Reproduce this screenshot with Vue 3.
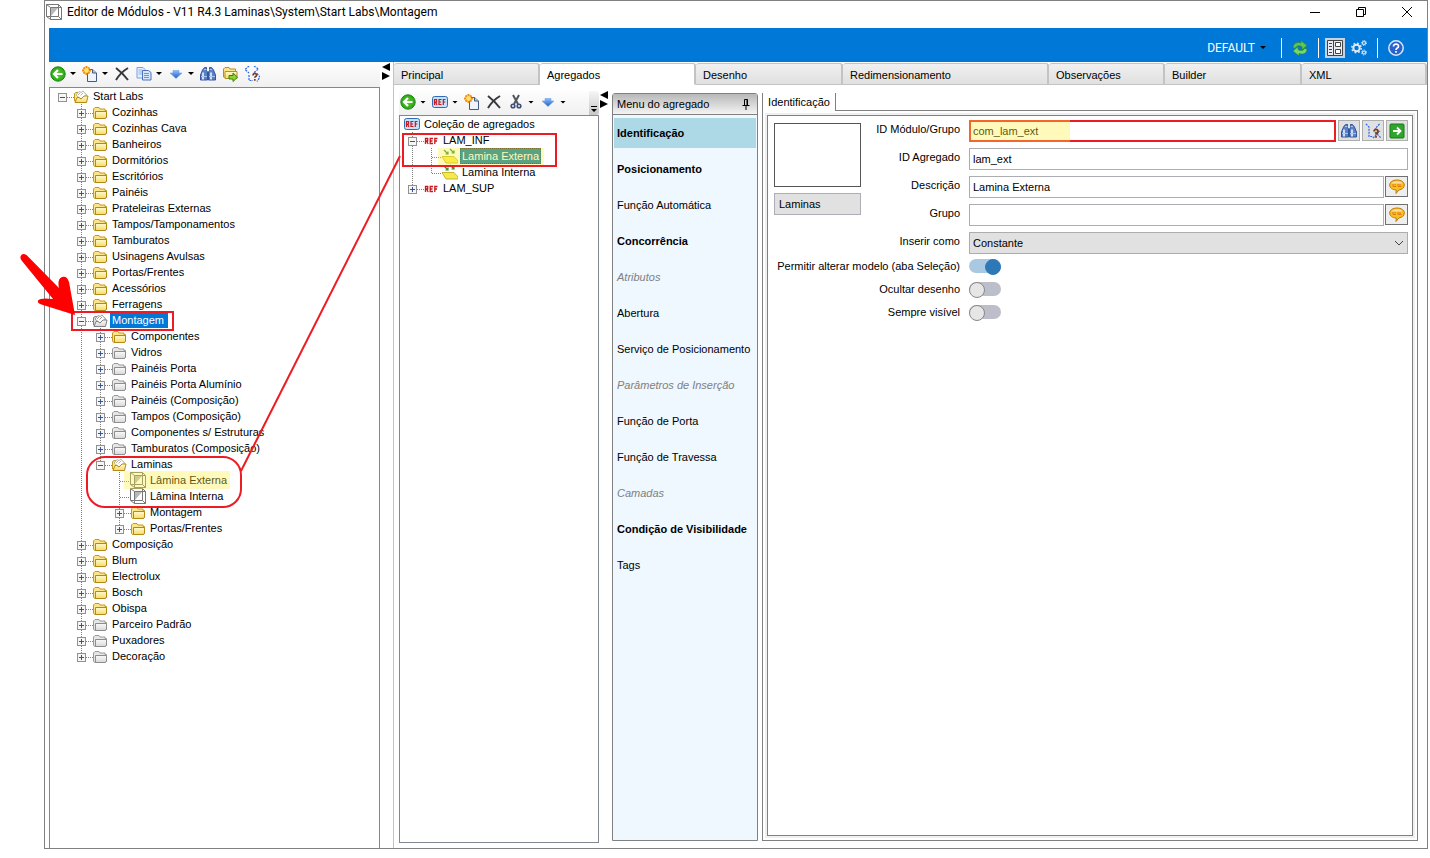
<script setup>
import { ref } from 'vue'

const y = (label, children) => ({ label, icon: 'folder', kids: true, children })
const g = (label, children) => ({ label, icon: 'folder-gray', kids: true, children })

const modules = {
  label: 'Start Labs', icon: 'folder-open', kids: true, children: [
    y('Cozinhas'), y('Cozinhas Cava'), y('Banheiros'), y('Dormitórios'), y('Escritórios'), y('Painéis'),
    y('Prateleiras Externas'), y('Tampos/Tamponamentos'), y('Tamburatos'), y('Usinagens Avulsas'),
    y('Portas/Frentes'), y('Acessórios'), y('Ferragens'),
    { label: 'Montagem', icon: 'folder-open-gray', kids: true, state: 'selected', children: [
      y('Componentes'), g('Vidros'), g('Painéis Porta'), g('Painéis Porta Alumínio'), g('Painéis (Composição)'),
      g('Tampos (Composição)'), g('Componentes s/ Estruturas'), g('Tamburatos (Composição)'),
      { label: 'Laminas', icon: 'folder-open', kids: true, children: [
        { label: 'Lâmina Externa', icon: 'cube' },
        { label: 'Lâmina Interna', icon: 'cube' },
        y('Montagem'), y('Portas/Frentes'),
      ] },
    ] },
    y('Composição'), y('Blum'), y('Electrolux'), y('Bosch'), y('Obispa'),
    g('Parceiro Padrão'), g('Puxadores'), g('Decoração'),
  ],
}

const aggregates = {
  label: 'Coleção de agregados', icon: 'ref-box', children: [
    { label: 'LAM_INF', icon: 'ref', kids: true, children: [
      { label: 'Lamina Externa', icon: 'sheet', state: 'current' },
      { label: 'Lamina Interna', icon: 'sheet' },
    ] },
    { label: 'LAM_SUP', icon: 'ref', kids: true },
  ],
}

// Turns a tree into rows; each row lists the guide cells drawn before its icon.
function flatten(node, guides = [], own = '', rows = []) {
  rows.push({ ...node, guides, own, open: !!node.children })
  const kids = node.children || []
  kids.forEach((kid, i) => {
    const last = i === kids.length - 1
    const passed = own === '' ? ['none'] : [...guides, own === 'full' ? 'line' : 'none']
    flatten(kid, passed, last ? 'half' : 'full', rows)
  })
  return rows
}

const moduleRows = flatten(modules)
const aggregateRows = flatten(aggregates).map(r => ({ ...r, guides: r.guides.slice(1) }))

const leftTools = [
  ['back', 1, 'Voltar'], ['new', 1, 'Novo'], ['delete', 0, 'Excluir'], ['copy', 1, 'Copiar'],
  ['down', 1, 'Mover'], ['find', 0, 'Localizar'], ['export', 0, 'Exportar'], ['where', 0, 'Onde é usado'],
]
const aggTools = [
  ['back', 1, 'Voltar'], ['ref-box', 1, 'Referência'], ['new', 0, 'Novo'], ['delete', 0, 'Excluir'],
  ['cut', 1, 'Recortar'], ['down', 1, 'Mover'],
]
const tabs = ['Principal', 'Agregados', 'Desenho', 'Redimensionamento', 'Observações', 'Builder', 'XML']
const menu = [
  ['Identificação', 'bold active'], ['Posicionamento', 'bold'], ['Função Automática', ''], ['Concorrência', 'bold'],
  ['Atributos', 'off'], ['Abertura', ''], ['Serviço de Posicionamento', ''], ['Parâmetros de Inserção', 'off'],
  ['Função de Porta', ''], ['Função de Travessa', ''], ['Camadas', 'off'], ['Condição de Visibilidade', 'bold'], ['Tags', ''],
]

const moduleId = ref('com_lam_ext')
const aggregateId = ref('lam_ext')
const description = ref('Lamina Externa')
const group = ref('')
const insertAs = ref('Constante')
const toggles = ref([
  { id: 'alterar', label: 'Permitir alterar modelo (aba Seleção)', on: true },
  { id: 'ocultar', label: 'Ocultar desenho', on: false },
  { id: 'visivel', label: 'Sempre visível', on: false },
])
</script>

<template>
  <div class="page">
    <svg class="defs" width="0" height="0" aria-hidden="true">
      <defs>
        <linearGradient id="gold" x1="0" y1="0" x2="0" y2="1"><stop offset="0" stop-color="#fffbd0" /><stop offset="1" stop-color="#f8d969" /></linearGradient>
        <linearGradient id="silver" x1="0" y1="0" x2="0" y2="1"><stop offset="0" stop-color="#fafafa" /><stop offset="1" stop-color="#d8d8d8" /></linearGradient>
        <radialGradient id="green"><stop offset="0" stop-color="#5fd02c" /><stop offset="1" stop-color="#2aa51a" /></radialGradient>
        <linearGradient id="blue" x1="0" y1="0" x2="0" y2="1"><stop offset="0" stop-color="#8dbdf6" /><stop offset="1" stop-color="#1c5cc8" /></linearGradient>
      </defs>
      <symbol id="i-folder" viewBox="0 0 16 16">
        <path d="M1.500 13V5l1.500-1.500h4L8 5h5v1.500h1.500V13l-1 1.500h-11z" fill="#fbe58a" stroke="#c39a22" />
        <path d="M3.500 14V7.500h11V13l-1 1.500h-10z" fill="url(#gold)" stroke="#b58a14" />
      </symbol>
      <symbol id="i-folder-gray" viewBox="0 0 16 16">
        <path d="M1.500 13V5l1.500-1.500h4L8 5h5v1.500h1.500V13l-1 1.500h-11z" fill="#e6e6e6" stroke="#999" />
        <path d="M3.500 14V7.500h11V13l-1 1.500h-10z" fill="url(#silver)" stroke="#8d8d8d" />
      </symbol>
      <symbol id="i-folder-open" viewBox="0 0 16 16">
        <path d="M1.500 13V5.500L3 4.500h2L13 6v7z" fill="#fbe58a" stroke="#c39a22" />
        <path d="M3 7l3-3.500 2 1L10 3l3.500 4L9 12z" fill="#fff" stroke="#b9b9a8" /><path d="M5 7l2-2M7.500 7.500L10 5" stroke="#b9b9a8" />
        <path d="M2 14.500L4 9.500h2l2 1.500 3-3h4l-1.500 6.500z" fill="url(#gold)" stroke="#b58a14" />
      </symbol>
      <symbol id="i-folder-open-gray" viewBox="0 0 16 16">
        <path d="M1.500 13V5.500L3 4.500h2L13 6v7z" fill="#ddd" stroke="#808080" />
        <path d="M3 7l3-3.500 2 1L10 3l3.500 4L9 12z" fill="#fff" stroke="#999" /><path d="M5 7l2-2M7.500 7.500L10 5" stroke="#999" />
        <path d="M2 14.500L4 9.500h2l2 1.500 3-3h4l-1.500 6.500z" fill="url(#silver)" stroke="#808080" />
      </symbol>
      <symbol id="i-cube" viewBox="0 0 16 16">
        <path d="M.5 .5h12l3 3v12h-11l-4-3z" fill="#fff" stroke="#777" />
        <path d="M4.500 3.500h8v9h-8zM.5 .5l4 3M15.500 3.500h-3M.5 12.500l4 0M15.500 15.500l-3-3M4.500 12.500v3M12.500 .5v3" fill="none" stroke="#777" />
        <path d="M12 4v8H5z" fill="#fff" /><path d="M5 4h7l-7 8z" fill="#b8b8b8" />
      </symbol>
      <symbol id="i-ref-box" viewBox="0 0 16 16">
        <rect x=".5" y="2.500" width="15" height="11" rx="2" fill="#c5e1fa" stroke="#2f6cb3" />
        <path d="M2.500 11V5.500h2v2.500h-2M3.500 8l1.500 3M9.500 5.500H7v5h2.500M7 8h2M13.500 5.500h-2.200V11M11.300 8h2" fill="none" stroke="#c8171d" stroke-width="1.200" />
      </symbol>
      <symbol id="i-ref" viewBox="0 0 16 16">
        <path d="M2.500 12V6.500h2.200V9H2.500M3.500 9l1.700 3M10 6.500H7.200v5H10M7.200 9H9.500M14.500 6.500h-2.700V12M11.800 9H14" fill="none" stroke="#c8171d" stroke-width="1.300" />
      </symbol>
      <symbol id="i-sheet" viewBox="0 0 16 16">
        <path d="M0 8.500h12l4 4.500v2H4z" fill="#f4ea4e" stroke="#c9b72a" />
        <path d="M2 2l4 4M6 3.500V6H3.500M8 1l4 4M12 2.500V5H9.500" fill="none" stroke="#2d8f23" stroke-width="1.200" />
      </symbol>
      <symbol id="i-back" viewBox="0 0 16 16">
        <circle cx="8" cy="8" r="7.200" fill="url(#green)" stroke="#1b8511" />
        <path d="M12.500 8H4.500M8 4L4 8l4 4" fill="none" stroke="#fff" stroke-width="2.200" />
      </symbol>
      <symbol id="i-new" viewBox="0 0 16 16">
        <path d="M5.500 3.500h5l4 3.500v8.500h-9z" fill="#eef4fd" stroke="#46597e" /><path d="M10.500 3.500V7h4" fill="#b8cbe8" stroke="#46597e" />
        <path d="M4.500 0v9M0 4.500h9M1.500 1.500l6 6M7.500 1.500l-6 6" stroke="#f08b12" stroke-width="2" /><circle cx="4.500" cy="4.500" r="2.400" fill="#ffe36b" />
      </symbol>
      <symbol id="i-delete" viewBox="0 0 16 16">
        <path d="M2 2c4 3 8 7 12 12M14 2C9 5 5 9 2 14" fill="none" stroke="#37393e" stroke-width="2" />
      </symbol>
      <symbol id="i-copy" viewBox="0 0 16 16">
        <path d="M1 1.500h6l2 2V12H1z" fill="#e5effd" stroke="#7b9fdc" /><path d="M2.500 4h4M2.500 6h4M2.500 8h4" stroke="#8db0ea" />
        <path d="M6.500 4.500h6l2.500 2V14H6.500z" fill="#d7e6fb" stroke="#4a74bd" /><path d="M8 7.500h5M8 9.500h5M8 11.500h5" stroke="#6a94db" />
      </symbol>
      <symbol id="i-down" viewBox="0 0 16 16"><path d="M5 4.500h6V7h3L8 12.500 2 7h3z" fill="url(#blue)" stroke="#6fa2e8" stroke-width=".6" /></symbol>
      <symbol id="i-find" viewBox="0 0 16 16">
        <path d="M4.500 1.500h2v3l1 1.500v8h-7V9l2-5zM9.500 1.500h2l2 2.500 2 5v5h-7V6l1-1.500z" fill="#5c82c6" stroke="#33569c" />
        <path d="M7 6h2v3H7z" fill="#33569c" /><path d="M3 6.500v7M11 6.500v7" stroke="#dce8fd" stroke-width="1.800" /><path d="M4 3.500h2.500M9.500 3.500H12M1 10.500h6M9 10.500h6" stroke="#a9c2ee" />
      </symbol>
      <symbol id="i-export" viewBox="0 0 16 16">
        <path d="M1.500 11V3L3 1.500h4L8 3h5.500v8z" fill="#fbe58a" stroke="#b78f1c" /><path d="M3 12.500V5.500h12v7z" fill="url(#gold)" stroke="#b78f1c" />
        <path d="M7 9.500h4V7l4.500 4.200L11 15.500V13H7z" fill="#8ed431" stroke="#3c7c15" />
      </symbol>
      <symbol id="i-where" viewBox="0 0 16 16">
        <path d="M5 0L1 3.500 5 7M10 0l4.500 3L10 6.500M5 9v5.500h4M13 7.500l3 3.500-3 4.500" fill="none" stroke="#2b66e8" stroke-width="1.200" stroke-dasharray="2 1" />
        <path d="M9 9.500c0-3 4-2.500 3.500 0-.3 1.200-1.700 1-1.700 2.300M10.800 13v1.800" fill="none" stroke="#7a3d1d" stroke-width="1.700" />
      </symbol>
      <symbol id="i-where-go" viewBox="0 0 16 16">
        <path d="M1 1l3 3v9.500h4M14.500 1L10 6M8 15l7-7M10 9l6 6" fill="none" stroke="#2b66e8" stroke-width="1.200" stroke-dasharray="2 1" />
        <path d="M9 8.500c0-3 4.500-2.500 4 0-.3 1.500-2 1-2 3M11 13v1.800" fill="none" stroke="#7a3d1d" stroke-width="1.800" />
      </symbol>
      <symbol id="i-cut" viewBox="0 0 16 16">
        <path d="M5 1l5 9M11 1L6 10" stroke="#50555e" stroke-width="2" />
        <circle cx="5" cy="12" r="1.800" fill="none" stroke="#3c4d78" stroke-width="1.600" /><circle cx="11" cy="12" r="1.800" fill="none" stroke="#3c4d78" stroke-width="1.600" />
      </symbol>
      <symbol id="i-go" viewBox="0 0 16 16">
        <rect x="1" y="1" width="14" height="14" rx="1" fill="#2fa52c" stroke="#157a17" /><path d="M4 8h7M8 4.500L11.500 8 8 11.500" fill="none" stroke="#fff" stroke-width="1.800" />
      </symbol>
      <symbol id="i-talk" viewBox="0 0 16 16">
        <path d="M8 1c4.200 0 7.300 2 7.300 5 0 2.700-2.300 4.600-5.500 5L7 14.500l.2-3.500C3.500 10.800.7 8.900.7 6 .7 3 3.800 1 8 1z" fill="#fbbf1e" stroke="#bd7e0b" />
        <path d="M2.500 4.500C4 1.500 12 1.500 13.500 4.500z" fill="#ffdca0" /><path d="M4 5v2.500h3M6 5v1.500M9 5v2.500M9 7.500h3.500M11 5v2" fill="none" stroke="#dd7c19" />
      </symbol>
      <symbol id="i-sync" viewBox="0 0 16 16">
        <path d="M1 8C1 3.500 5 1.500 9 3V.5L15 5.500 10 10V7C7.500 5 5 5.500 3.500 8z" fill="#5fc452" stroke="#2a8a2b" stroke-width=".7" />
        <path d="M15 9c0 4.500-4 6-8 4.500V16L1 11l5-4.500V9.500c2.500 1.500 5 1.500 6.500-1z" fill="#78d768" stroke="#2a8a2b" stroke-width=".7" />
      </symbol>
      <symbol id="i-form" viewBox="0 0 16 16">
        <path d="M.5 .5h15v15H.5zM6.500 .5v15" fill="#e9edf3" stroke="#444" /><path d="M2 3.500h3M2 6.500h3M2 9.500h3M2 12.500h3" stroke="#444" />
        <path d="M8.500 2.500h5v4h-5zM8.500 9.500h5v4h-5z" fill="#fff" stroke="#444" />
      </symbol>
      <symbol id="i-gears" viewBox="0 0 16 16">
        <circle cx="5.500" cy="8" r="3.200" fill="none" stroke="#dfe9f4" stroke-width="2" />
        <circle cx="5.500" cy="8" r="4.700" fill="none" stroke="#dfe9f4" stroke-width="1.500" stroke-dasharray="1.800 1.890" />
        <g fill="none" stroke="#dfe9f4"><circle cx="13" cy="3" r="1.500" stroke-width="1.200" /><circle cx="13" cy="3" r="2.500" stroke-dasharray="1 .96" /><circle cx="13" cy="12.500" r="1.500" stroke-width="1.200" /><circle cx="13" cy="12.500" r="2.500" stroke-dasharray="1 .96" /></g>
      </symbol>
      <symbol id="i-help" viewBox="0 0 16 16">
        <circle cx="8" cy="8" r="7.200" fill="#2b62cf" stroke="#dbe6f8" stroke-width="1.500" />
        <path d="M5.500 6.500c0-3.500 5.200-3 5 0-.1 1.700-2.500 1.500-2.500 3.500M8 11v1.800" fill="none" stroke="#fff" stroke-width="1.700" />
      </symbol>
    </svg>

    <main class="window">
      <header class="title">
        <svg class="ico"><use href="#i-cube" /></svg>
        <h1>Editor de Módulos - V11 R4.3 Laminas\System\Start Labs\Montagem</h1>
        <div class="winbtns">
          <button aria-label="Minimizar"><svg viewBox="0 0 12 12"><path d="M1 6.500h10" /></svg></button>
          <button aria-label="Restaurar"><svg viewBox="0 0 12 12"><path d="M1.500 3.500h7v7h-7zM3.500 3.500v-2h7v7h-2" /></svg></button>
          <button aria-label="Fechar"><svg viewBox="0 0 12 12"><path d="M1 1l10 10M11 1L1 11" /></svg></button>
        </div>
      </header>

      <div class="ribbon">
        <button class="profile">DEFAULT <i class="caret"></i></button>
        <span class="sep"></span>
        <button aria-label="Atualizar"><svg class="ico"><use href="#i-sync" /></svg></button>
        <span class="sep"></span>
        <button class="pressed" aria-label="Formulário"><svg class="ico"><use href="#i-form" /></svg></button>
        <button aria-label="Configurações"><svg class="ico"><use href="#i-gears" /></svg></button>
        <span class="sep"></span>
        <button aria-label="Ajuda"><svg class="ico"><use href="#i-help" /></svg></button>
      </div>

      <div class="body">
        <section class="modules">
          <div class="toolbar">
            <div v-for="t in leftTools" :key="t[0]" class="tool">
              <button :aria-label="t[2]"><svg class="ico"><use :href="'#i-' + t[0]" /></svg></button>
              <button v-if="t[1]" class="drop" :aria-label="t[2] + ' opções'"><i class="caret"></i></button>
            </div>
          </div>
          <ul class="tree">
            <li v-for="(r, i) in moduleRows" :key="i">
              <span v-for="(c, k) in r.guides" :key="k" class="cell" :class="c"></span>
              <span class="cell dash" :class="r.own">
                <button v-if="r.kids" class="exp" :class="{ closed: !r.open }" :aria-label="'Expandir ' + r.label"></button>
              </span>
              <svg class="ico node"><use :href="'#i-' + r.icon" /></svg>
              <span class="text" :class="r.state">{{ r.label }}</span>
            </li>
          </ul>
        </section>

        <div class="splitter"><i class="tri left"></i><i class="tri right"></i></div>

        <section class="editor">
          <div class="tabs">
            <button v-for="(t, i) in tabs" :key="t" :class="{ active: i === 1 }">{{ t }}</button>
          </div>
          <div class="panes">
            <section class="aggs">
              <div class="toolbar">
                <div v-for="t in aggTools" :key="t[0]" class="tool">
                  <button :aria-label="t[2]"><svg class="ico"><use :href="'#i-' + t[0]" /></svg></button>
                  <button v-if="t[1]" class="drop" :aria-label="t[2] + ' opções'"><i class="caret"></i></button>
                </div>
                <button class="overflow" aria-label="Mais opções"><svg viewBox="0 0 6 6"><path d="M0 0h6v1H0zM0 3h6L3 6z" /></svg></button>
              </div>
              <ul class="tree">
                <li v-for="(r, i) in aggregateRows" :key="i">
                  <span v-for="(c, k) in r.guides" :key="k" class="cell" :class="c"></span>
                  <span v-if="i > 0" class="cell dash" :class="r.own">
                    <button v-if="r.kids" class="exp" :class="{ closed: !r.open }" :aria-label="'Expandir ' + r.label"></button>
                  </span>
                  <svg class="ico node"><use :href="'#i-' + r.icon" /></svg>
                  <span class="text" :class="r.state">{{ r.label }}</span>
                </li>
              </ul>
            </section>

            <div class="splitter"><i class="tri left"></i><i class="tri right"></i></div>

            <nav class="menu">
              <h2>Menu do agregado
                <svg viewBox="0 0 8 12"><path d="M2.500 7V1.500h3V7M5 1.500V7M.5 7.500h7M4 8v4" /></svg>
              </h2>
              <button v-for="m in menu" :key="m[0]" :class="m[1]">{{ m[0] }}</button>
            </nav>

            <section class="detail">
              <div class="detail-tabs"><button>Identificação</button></div>
              <div class="frame">
                <form class="form" @submit.prevent>
                  <div class="preview">
                    <div class="thumb"></div>
                    <div class="thumb-name">Laminas</div>
                  </div>

                  <label for="mod">ID Módulo/Grupo</label>
                  <div class="field">
                    <input id="mod" v-model="moduleId" class="marked" type="text">
                    <button type="button" aria-label="Localizar módulo"><svg class="ico"><use href="#i-find" /></svg></button>
                    <button type="button" aria-label="Onde é usado"><svg class="ico"><use href="#i-where-go" /></svg></button>
                    <button type="button" aria-label="Ir para"><svg class="ico"><use href="#i-go" /></svg></button>
                  </div>

                  <label for="agg">ID Agregado</label>
                  <div class="field"><input id="agg" v-model="aggregateId" type="text"></div>

                  <label for="desc">Descrição</label>
                  <div class="field tight">
                    <input id="desc" v-model="description" type="text">
                    <button type="button" class="talk" aria-label="Traduzir descrição"><svg class="ico"><use href="#i-talk" /></svg></button>
                  </div>

                  <label for="grp">Grupo</label>
                  <div class="field tight">
                    <input id="grp" v-model="group" type="text">
                    <button type="button" class="talk" aria-label="Traduzir grupo"><svg class="ico"><use href="#i-talk" /></svg></button>
                  </div>

                  <label for="ins">Inserir como</label>
                  <div class="field select">
                    <select id="ins" v-model="insertAs"><option>Constante</option></select>
                    <svg viewBox="0 0 10 6"><path d="M1 1l4 4 4-4" /></svg>
                  </div>

                  <template v-for="t in toggles" :key="t.id">
                    <label class="short" :for="t.id">{{ t.label }}</label>
                    <div class="field short"><input :id="t.id" v-model="t.on" class="toggle" type="checkbox"></div>
                  </template>
                </form>
              </div>
            </section>
          </div>
        </section>
      </div>
    </main>

    <svg class="notes" width="1430" height="858" aria-hidden="true">
      <g class="marker">
        <rect x="124" y="471" width="106" height="18" />
        <rect x="438" y="148" width="106" height="17" />
        <rect x="969" y="120" width="101" height="22" />
      </g>
      <g class="pen">
        <rect x="72" y="312" width="101" height="18" />
        <rect x="87" y="457" width="154" height="50" rx="18" />
        <rect x="403" y="134" width="153" height="32" />
        <path d="M241 471L400 156" />
      </g>
      <path class="arrow" d="M20.500 256.500Q22 252.500 26.500 255L59 288Q57 279 62 277Q67 275.500 69 282L75 315L43 305Q36 303 38.500 300Q41 297.500 53 299L22 261Q20 259 20.500 256.500z" />
    </svg>
  </div>
</template>

<style>
body { margin: 0; background: #fff; }
</style>

<style scoped>
* { box-sizing: border-box; }
.page { position: relative; min-height: 100vh; display: flex; padding: 0 2px 9px 44px; font: 11px/16px "Liberation Sans", Arial, sans-serif; color: #000; overflow: hidden; }
.defs { position: absolute; }
button { font: inherit; color: inherit; background: none; border: 0; padding: 0; margin: 0; }
h1, h2, ul { margin: 0; padding: 0; font: inherit; }
.ico { display: block; width: 16px; height: 16px; flex: none; }
.window { flex: 1; min-width: 0; display: flex; flex-direction: column; border: 1px solid #808080; padding-left: 4px; }
.title { display: flex; align-items: center; height: 27px; padding-bottom: 5px; gap: 5px; margin-left: -3px; font: 12px/20px Roboto, "Noto Sans", sans-serif; }
.winbtns { margin-left: auto; display: flex; gap: 34px; padding-right: 14px; }
.winbtns button { width: 12px; height: 12px; display: flex; }
.winbtns svg { width: 12px; height: 12px; fill: none; stroke: #000; }
.ribbon { height: 34px; background: #0078d7; color: #fff; display: flex; align-items: center; justify-content: flex-end; gap: 10px; padding: 5px 23px 0 0; font: 12px/16px Roboto, "Noto Sans", sans-serif; }
.ribbon .profile { display: flex; align-items: center; gap: 5px; margin-right: 5px; }
.ribbon .sep { width: 1px; height: 20px; background: #fff; }
.ribbon .pressed { background: #c4d3e6; padding: 2px; margin: 0 -4px; }
.caret { display: block; width: 6px; height: 3px; background: #000; clip-path: polygon(0 0, 100% 0, 50% 100%); }
.body { flex: 1; display: flex; min-height: 0; }
.modules { width: 331px; display: flex; flex-direction: column; }
.toolbar { display: flex; align-items: center; gap: 6px; height: 24px; padding: 0 0 2px 1px; background: linear-gradient(#fdfdfd, #f0f0f0); }
.modules .toolbar { height: 25px; }
.tool { display: flex; align-items: center; gap: 4px; }
.drop { height: 16px; display: flex; align-items: center; }
.overflow { margin: 0 0 -2px auto; width: 10px; height: 24px; padding: 12px 2px 0; background: linear-gradient(#f6f6f6, #c6c6c6); border-radius: 0 3px 3px 0; }
.overflow svg { display: block; width: 6px; height: 6px; }
.tree { flex: 1; border: 1px solid #828790; background: #fff; list-style: none; padding-left: 3px; }
.modules .tree { border-bottom: 0; }
.tree li { display: flex; height: 16px; }
.cell { width: 19px; height: 16px; flex: none; display: grid; grid-template-columns: 5px 9px 5px; align-items: center; background-repeat: no-repeat; }
.line, .full, .half { background-image: repeating-linear-gradient(#808080 0 1px, transparent 1px 2px); background-size: 1px 16px; background-position: 9px 0; }
.half { background-size: 1px 9px; }
.dash { position: relative; }
.dash::after { content: ""; position: absolute; left: 10px; top: 9px; width: 11px; height: 1px; background: repeating-linear-gradient(90deg, #808080 0 1px, transparent 1px 2px); }
.exp { grid-column: 2; width: 9px; height: 9px; margin-top: 2px; z-index: 1; border: 1px solid #919191; background: linear-gradient(#34559b, #34559b) center / 5px 1px no-repeat #f6f6f6; }
.exp.closed { background: linear-gradient(#34559b, #34559b) center / 5px 1px no-repeat, linear-gradient(#34559b, #34559b) center / 1px 5px no-repeat #f6f6f6; }
.node { margin: 0 2px 0 1px; overflow: visible; z-index: 1; }
.text { padding: 0 2px; white-space: nowrap; }
.text.selected { background: #0078d7; color: #fff; padding-right: 4px; }
.text.current { background: #0078a8; color: #fff; outline: 1px dotted #333; outline-offset: -1px; }
.splitter { width: 13px; padding: 1px 0 0 2px; display: flex; flex-direction: column; gap: 1px; }
.tri { width: 8px; height: 8px; background: #000; }
.tri.left { clip-path: polygon(100% 0, 100% 100%, 0 50%); }
.tri.right { clip-path: polygon(0 0, 100% 50%, 0 100%); }
.editor { flex: 1; min-width: 0; display: flex; flex-direction: column; border-left: 1px solid #c3c3c3; padding-top: 1px; }
.tabs { display: grid; grid-template-columns: 146fr 156fr 147fr 206fr 116fr 137fr 125fr; height: 22px; }
.tabs button { text-align: left; padding: 2px 7px 0; background: linear-gradient(#f0f0f0, #e0e0e0); border: 1px solid #c3c3c3; border-left-width: 0; border-right-width: 2px; border-radius: 3px 3px 0 0; }
.tabs .active { background: #fff; border-bottom-color: #fff; }
.panes { flex: 1; display: flex; padding: 6px 9px 5px 5px; }
.aggs { width: 200px; display: flex; flex-direction: column; }
.panes .splitter { padding-left: 1px; padding-top: 0; }
.menu { width: 146px; display: flex; flex-direction: column; margin: 2px 4px 2px 0; gap: 6px; border: 1px solid #808080; border-radius: 3px 3px 0 0; background: #eff7ff; }
.menu h2 { display: flex; justify-content: space-between; align-items: center; height: 21px; padding: 0 7px 0 4px; margin-bottom: -3px; background: linear-gradient(#b8b8b8, #f4f4f4); border-bottom: 1px solid #808080; }
.menu h2 svg { width: 8px; height: 12px; fill: none; stroke: #000; }
.menu button { height: 30px; margin: 0 1px; padding: 0 3px; text-align: left; white-space: nowrap; }
.menu .bold { font-weight: bold; }
.menu .active { background: #add8e6; }
.menu .off { font-style: italic; color: #808080; }
.detail { flex: 1; min-width: 0; display: flex; flex-direction: column; margin: 2px 0; }
.detail-tabs { height: 18px; display: flex; }
.detail-tabs::after { content: ""; flex: 1; border-bottom: 1px solid #808080; }
.detail-tabs button { width: 74px; border: solid #808080; border-width: 0 1px; white-space: nowrap; text-align: center; }
.frame { flex: 1; display: flex; border: 1px solid #808080; border-top: 0; padding: 4px; }
.form { flex: 1; display: grid; grid-template-columns: 192px 1fr; grid-template-rows: repeat(4, 28px) 27px repeat(3, 23px); column-gap: 9px; align-items: start; align-content: start; border: 1px solid #808080; outline: 2px solid #f0f0f0; padding: 4px 4px 0 0; }
.form label { grid-column: 1; justify-self: end; white-space: nowrap; padding-top: 1px; }
.form .short { padding-top: 0; height: 14px; line-height: 14px; }
.preview { grid-area: 1 / 1 / 5 / 2; justify-self: start; width: 87px; margin: 3px 0 0 6px; display: grid; gap: 6px; }
.form label[for="mod"] { grid-row: 1; }
.form label[for="agg"] { grid-row: 2; }
.form label[for="desc"] { grid-row: 3; }
.form label[for="grp"] { grid-row: 4; }
.form label[for="ins"] { grid-row: 5; }
.thumb { height: 64px; border: 1px solid #555; }
.thumb-name { height: 22px; padding: 2px 4px; border: 1px solid #adadb5; background: #e1e1e1; }
.field { grid-column: 2; display: flex; gap: 2px; height: 22px; position: relative; }
.field.tight { gap: 1px; }
.field input[type="text"] { flex: 1; min-width: 0; height: 22px; border: 1px solid #abadb3; padding: 0 3px; font: inherit; color: inherit; background: #fff; outline: 0; }
.field .marked[type="text"] { border: 2px solid #ed1c24; padding: 0 2px; }
.field button { width: 22px; height: 21px; border: 1px solid #adadad; background: #e1e1e1; display: grid; place-items: center; }
.field .talk { width: 23px; border-color: #707070; background: #eee; }
.field select { flex: 1; appearance: none; border: 1px solid #adadad; border-radius: 0; background: #e1e1e1; font: inherit; color: inherit; padding: 0 3px; }
.select svg { position: absolute; right: 4px; top: 8px; width: 10px; height: 6px; fill: none; stroke: #444; }
.toggle { appearance: none; margin: 0; width: 32px; height: 14px; border-radius: 7px; background: #bcbfc9; display: flex; }
.toggle::before { content: ""; width: 14px; height: 14px; border-radius: 50%; background: #e6e6e6; border: 1px solid #888; }
.toggle:checked { background: #a9c8e2; justify-content: flex-end; }
.toggle:checked::before { background: #2f78b7; border-color: #2f78b7; }
.notes { position: absolute; left: 0; top: 0; pointer-events: none; z-index: 5; }
.marker { fill: #fff03c; fill-opacity: .35; }
.pen { fill: none; stroke: #ed1c24; stroke-width: 2; }
.arrow { fill: #fe0000; }
</style>
